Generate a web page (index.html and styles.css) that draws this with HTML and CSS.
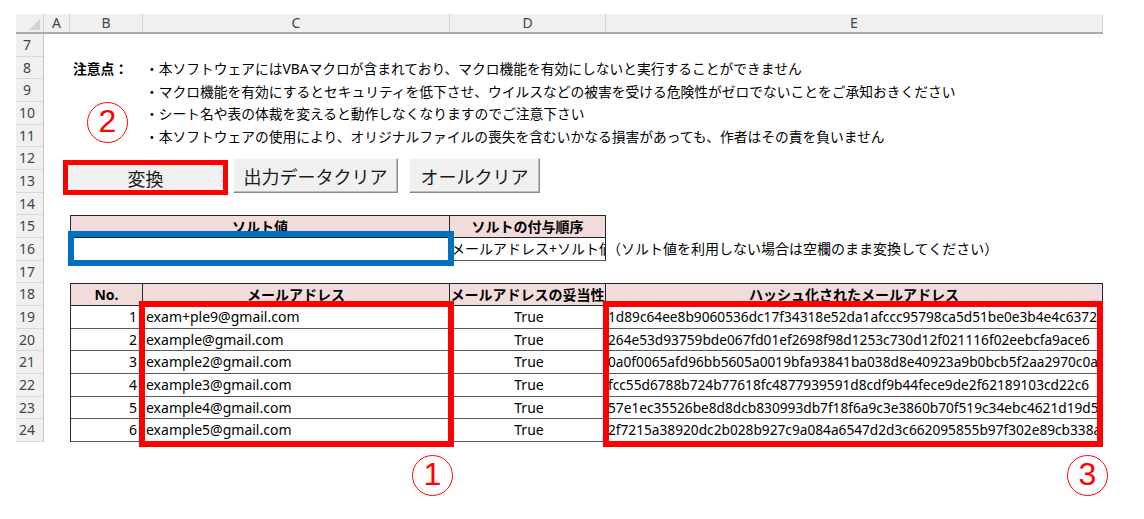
FILE: index.html
```html
<!DOCTYPE html>
<html lang="ja">
<head>
    <meta charset="UTF-8">
    <title>メールアドレス ハッシュ化ツール</title>
    <link rel="stylesheet" href="styles.css">
</head>
<body>
    <div class="sheet">
        <div class="col-head">
            <div class="corner"></div>
            <div>A</div>
            <div>B</div>
            <div>C</div>
            <div>D</div>
            <div>E</div>
        </div>

        <div class="sheet-body">
            <div class="row-head">
                <div>7</div><div>8</div><div>9</div><div>10</div><div>11</div><div>12</div>
                <div>13</div><div>14</div><div>15</div><div>16</div><div>17</div><div>18</div>
                <div>19</div><div>20</div><div>21</div><div>22</div><div>23</div><div>24</div>
            </div>

            <div class="cells">
                <div class="notes">
                    <div class="notes-label">注意点：</div>
                    <p>・本ソフトウェアにはVBAマクロが含まれており、マクロ機能を有効にしないと実行することができません</p>
                    <p>・マクロ機能を有効にするとセキュリティを低下させ、ウイルスなどの被害を受ける危険性がゼロでないことをご承知おきください</p>
                    <p>・シート名や表の体裁を変えると動作しなくなりますのでご注意下さい</p>
                    <p>・本ソフトウェアの使用により、オリジナルファイルの喪失を含むいかなる損害があっても、作者はその責を負いません</p>
                </div>

                <span class="step step-2">2</span>

                <div class="buttons">
                    <button class="btn btn-convert">変換</button>
                    <button class="btn btn-clear-out">出力データクリア</button>
                    <button class="btn btn-clear-all">オールクリア</button>
                </div>

                <div class="salt">
                    <div class="th first top">ソルト値</div>
                    <div class="th top">ソルトの付与順序</div>
                    <div class="salt-note"></div>
                    <div class="td first"></div>
                    <div class="td clip">メールアドレス+ソルト値</div>
                    <div class="salt-note">（ソルト値を利用しない場合は空欄のまま変換してください）</div>
                    <div class="mark-blue"></div>
                </div>

                <div class="hash-table">
                    <div class="th">No.</div>
                    <div class="th">メールアドレス</div>
                    <div class="th">メールアドレスの妥当性</div>
                    <div class="th">ハッシュ化されたメールアドレス</div>

                    <div class="td num">1</div>
                    <div class="td">exam+ple9@gmail.com</div>
                    <div class="td center">True</div>
                    <div class="td hash">1d89c64ee8b9060536dc17f34318e52da1afccc95798ca5d51be0e3b4e4c6372</div>

                    <div class="td num">2</div>
                    <div class="td">example@gmail.com</div>
                    <div class="td center">True</div>
                    <div class="td hash">264e53d93759bde067fd01ef2698f98d1253c730d12f021116f02eebcfa9ace6</div>

                    <div class="td num">3</div>
                    <div class="td">example2@gmail.com</div>
                    <div class="td center">True</div>
                    <div class="td hash">0a0f0065afd96bb5605a0019bfa93841ba038d8e40923a9b0bcb5f2aa2970c0a</div>

                    <div class="td num">4</div>
                    <div class="td">example3@gmail.com</div>
                    <div class="td center">True</div>
                    <div class="td hash">fcc55d6788b724b77618fc4877939591d8cdf9b44fece9de2f62189103cd22c6</div>

                    <div class="td num">5</div>
                    <div class="td">example4@gmail.com</div>
                    <div class="td center">True</div>
                    <div class="td hash">57e1ec35526be8d8dcb830993db7f18f6a9c3e3860b70f519c34ebc4621d19d5</div>

                    <div class="td num">6</div>
                    <div class="td">example5@gmail.com</div>
                    <div class="td center">True</div>
                    <div class="td hash">2f7215a38920dc2b028b927c9a084a6547d2d3c662095855b97f302e89cb338a</div>

                    <div class="mark-red mark-mail"></div>
                    <div class="mark-red mark-hash"></div>
                </div>

                <span class="step step-1">1</span>
                <span class="step step-3">3</span>
            </div>
        </div>
    </div>
</body>
</html>
```

FILE: styles.css
```css
* {
    margin: 0;
    padding: 0;
    box-sizing: border-box;
}

body {
    font-family: "Noto Sans", "Noto Sans CJK JP", sans-serif;
    font-size: 14px;
    color: #000;
    background: #fff;
}

.sheet {
    margin: 14px 0 0 16px;
    width: 1087px;
}

/* column letters */
.col-head {
    display: grid;
    grid-template-columns: 28px 26px 73px 307px 156px 497px;
    height: 20px;
    background: #f0f0f0;
    border-bottom: 2px solid #ababab;
}

.col-head div {
    border-right: 1px solid #d4d4d4;
    text-align: center;
    line-height: 18px;
    color: #444;
}

.corner {
    position: relative;
}

.corner::after {
    content: "";
    position: absolute;
    right: 3px;
    bottom: 2px;
    border-left: 11px solid transparent;
    border-bottom: 11px solid #d2d2d2;
}

.sheet-body {
    display: flex;
    align-items: flex-start;
}

.row-head {
    width: 28px;
    display: grid;
    grid-template-rows: repeat(18, 22.67px);
    background: #f0f0f0;
    border-right: 1px solid #c4c4c4;
}

.row-head div {
    border-bottom: 1px solid #d8d8d8;
    padding-right: 5px;
    text-align: center;
    line-height: 22px;
    color: #444;
}

.cells {
    display: grid;
    grid-template-columns: 26px 73px 307px 156px 497px;
    grid-template-rows: repeat(18, 22.67px) 64px;
}

/* notes rows 8-11 */
.notes {
    grid-row: 2 / 6;
    grid-column: 2 / 6;
    display: grid;
    grid-template-columns: 73px 1fr;
    grid-auto-rows: 22.67px;
    align-items: center;
    font-size: 13.75px;
}

.notes-label {
    font-weight: bold;
    padding-left: 3px;
}

.notes p {
    grid-column: 2;
    padding-left: 2px;
    white-space: nowrap;
}

/* buttons row 12-13 */
.buttons {
    grid-row: 6 / 8;
    grid-column: 1 / -1;
    display: flex;
    align-items: flex-start;
    padding: 11px 0 0 19px;
}

.btn {
    height: 35px;
    width: 165px;
    font-family: inherit;
    font-size: 18px;
    color: #1a1a1a;
    background: #f0f0f0;
    border: 1px solid;
    border-color: #fafafa #8a8a8a #8a8a8a #fafafa;
    box-shadow: inset -1px -1px 0 #bdbdbd;
}

.btn-convert {
    margin-top: 2px;
    border: 5px solid #ff0000;
    box-shadow: none;
}

.btn-clear-out {
    margin-left: 5px;
}

.btn-clear-all {
    margin-left: 11px;
    width: 131px;
}

/* cells shared */
.th,
.td {
    border-right: 1px solid #262626;
    border-bottom: 1px solid #5a5a5a;
    white-space: nowrap;
    overflow: hidden;
    line-height: 21px;
}

.th {
    background: #f2dcdb;
    font-weight: bold;
    text-align: center;
    border-bottom-color: #262626;
}

.td {
    padding-left: 3px;
}

.first {
    border-left: 1px solid #262626;
}

.top {
    border-top: 1px solid #262626;
}

/* salt rows 15-16 */
.salt {
    position: relative;
    grid-row: 9 / 11;
    grid-column: 2 / 6;
    display: grid;
    grid-template-columns: 380px 156px 1fr;
    grid-template-rows: repeat(2, 22.67px);
}

.salt .clip {
    padding-left: 1px;
}

.salt-note {
    white-space: nowrap;
    line-height: 21px;
    padding-left: 1px;
}

.mark-blue {
    position: absolute;
    left: -2px;
    top: 16px;
    width: 386px;
    height: 35px;
    border: 6px solid #0070c0;
}

/* hashed list rows 18-24 */
.hash-table {
    position: relative;
    grid-row: 12 / 19;
    grid-column: 2 / 6;
    display: grid;
    grid-template-columns: 72px 307px 156px 497px;
    grid-template-rows: 21.67px repeat(6, 22.67px);
    border-top: 1px solid #262626;
    border-left: 1px solid #262626;
}

.hash-table .num {
    text-align: right;
    padding-right: 5px;
}

.hash-table .center {
    text-align: center;
}

.hash-table .hash {
    font-size: 13.7px;
    padding-left: 2px;
}

.mark-red {
    position: absolute;
    top: 17px;
    height: 146px;
    border: 6px solid #ff0000;
}

.mark-mail {
    left: 68px;
    width: 315px;
}

.mark-hash {
    left: 532px;
    width: 500px;
}

/* circled step numbers */
.step {
    width: 41px;
    height: 41px;
    border: 1.5px solid #ff0000;
    border-radius: 50%;
    color: #ff0000;
    font-family: "Liberation Sans", sans-serif;
    font-size: 32px;
    line-height: 37px;
    text-align: center;
    justify-self: start;
    align-self: start;
}

.step-2 {
    grid-row: 4 / 6;
    grid-column: 2;
    margin-left: 17px;
}

.step-1 {
    grid-row: 19;
    grid-column: 3;
    justify-self: end;
    margin: 13px -3px 0 0;
}

.step-3 {
    grid-row: 19;
    grid-column: 5;
    justify-self: end;
    margin: 13px -5px 0 0;
}
```
